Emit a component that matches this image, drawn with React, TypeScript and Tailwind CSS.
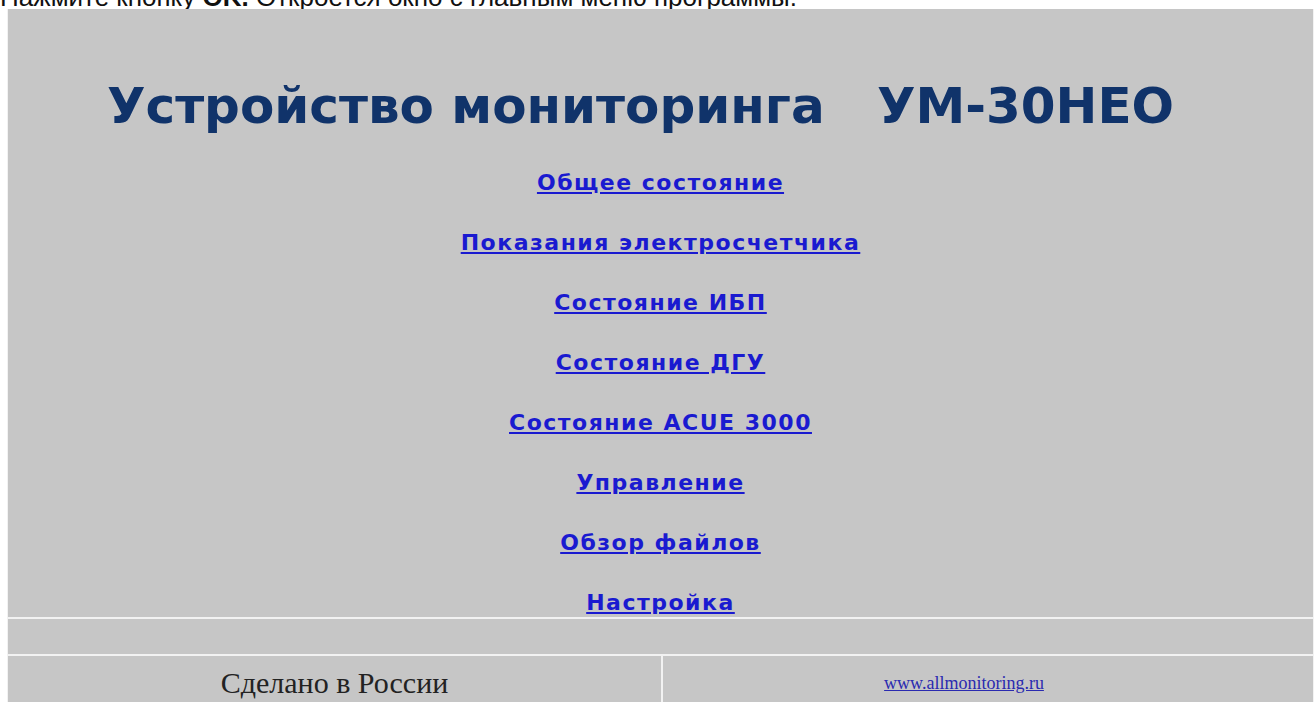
const menu = [
  'Общее состояние',
  'Показания электросчетчика',
  'Состояние ИБП',
  'Состояние ДГУ',
  'Состояние ACUE 3000',
  'Управление',
  'Обзор файлов',
  'Настройка',
];

export default function App() {
  return (
    <div className="h-[702px] overflow-hidden bg-white">
      {/* caption line above the screenshot, cut by the frame */}
      <div className="h-[9px] overflow-hidden">
        <p
          className="-mt-[18px] whitespace-nowrap text-[26px] leading-[30px] text-[#111]"
          style={{ fontFamily: "'Liberation Sans', Arial, sans-serif" }}
        >
          Нажмите кнопку <b>OK.</b> Откроется окно с главным меню программы.
        </p>
      </div>

      <div className="ml-[7px] w-[1307px] border-x border-[#f2f2f2] bg-[#c6c6c6]">
        <h1
          className="pt-[67px] pr-[40px] text-center text-[50px] font-bold leading-[60px] whitespace-pre text-[#10336a]"
          style={{ fontFamily: "'DejaVu Sans', Verdana, sans-serif" }}
        >
          {'Устройство мониторинга   УМ-30НЕО'}
        </h1>

        <nav
          className="mt-[31px] flex flex-col items-center gap-[30px]"
          style={{ fontFamily: "'DejaVu Sans', Verdana, sans-serif" }}
        >
          {menu.map((item) => (
            <a
              key={item}
              href="#"
              className="flex h-[30px] items-center text-[22px] font-bold tracking-[1.5px] text-[#1a1ad0] underline"
            >
              {item}
            </a>
          ))}
        </nav>

        <div className="h-[37px] border-t-2 border-[#f2f2f2]" />

        <div className="grid h-[60px] grid-cols-[653px_1fr] border-t-2 border-[#f2f2f2]">
          <div
            className="flex h-[52px] items-center justify-center text-[30px] text-[#222]"
            style={{ fontFamily: "'Liberation Serif', 'Times New Roman', serif" }}
          >
            Сделано в России
          </div>
          <div
            className="flex h-[54px] items-center justify-center border-l-2 border-[#f2f2f2] pr-[48px]"
            style={{ fontFamily: "'Liberation Serif', 'Times New Roman', serif" }}
          >
            <a href="#" className="text-[18px] text-[#2a2ab0] underline">
              www.allmonitoring.ru
            </a>
          </div>
        </div>
      </div>
    </div>
  );
}
